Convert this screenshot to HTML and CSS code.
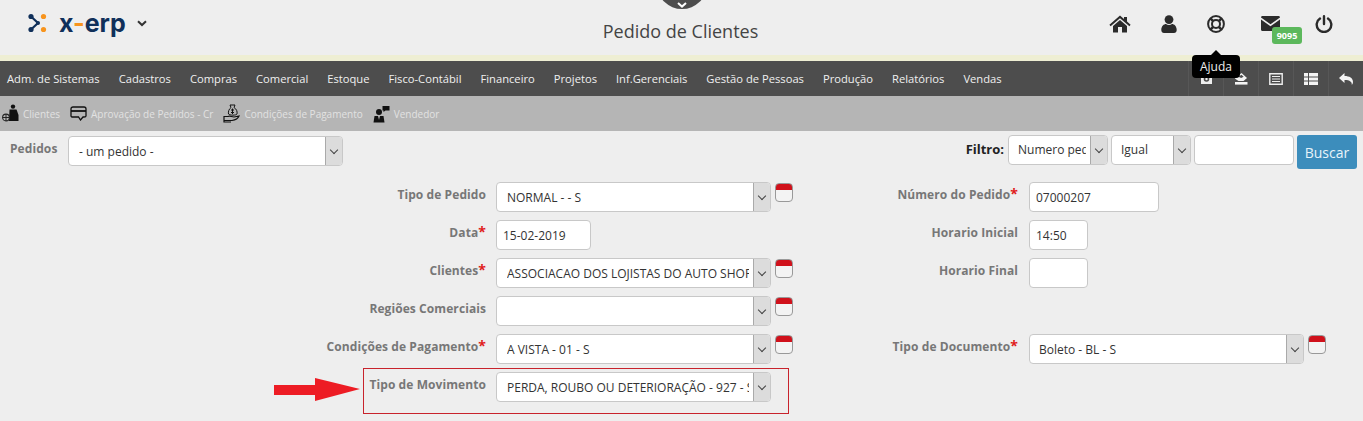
FILE: index.html
```html
<!DOCTYPE html>
<html lang="en">
<head>
  <meta charset="UTF-8">
  <title>X-ERP - Pedido de Clientes</title>
  <link rel="stylesheet" href="styles.css">
</head>
<body>
  <header class="top-bar">
    <div class="logo">
      <svg class="logo-mark" width="20" height="20" viewBox="0 0 20 20">
        <path d="M3 3.5 L10 10 L3 16.5" fill="none" stroke="#10305a" stroke-width="2.2"/>
        <circle cx="3" cy="3.5" r="2.6" fill="#10305a"/>
        <circle cx="3" cy="16.5" r="2.6" fill="#10305a"/>
        <circle cx="10" cy="10" r="2" fill="#10305a"/>
        <circle cx="15.5" cy="3.5" r="2.6" fill="#f7941d"/>
        <circle cx="15.5" cy="16.5" r="2.6" fill="#f7941d"/>
      </svg>
      <span class="logo-text">x<span class="logo-dash">-</span>erp</span>
      <svg class="logo-caret" width="10" height="7" viewBox="0 0 10 7"><path d="M1 1.2 L5 5 L9 1.2" fill="none" stroke="#333" stroke-width="2"/></svg>
    </div>
    <h1 class="page-title">Pedido de Clientes</h1>
    <div class="top-icons">
      <svg width="22" height="18" viewBox="0 0 22 18"><path fill="#2b2b2b" d="M11 0.5 L15 4 V2 H18 V6.6 L21.6 9.8 L20.4 11.2 L11 3.2 L1.6 11.2 L0.4 9.8 Z M4 11 L11 5 L18 11 V17.5 H13 V12 H9 V17.5 H4 Z"/></svg>
      <svg width="16" height="18" viewBox="0 0 16 18"><circle cx="8" cy="4.6" r="4.4" fill="#2b2b2b"/><path fill="#2b2b2b" d="M0.3 15 C0.3 11 3 9 5 9 C6.5 10.2 9.5 10.2 11 9 C13 9 15.7 11 15.7 15 C15.7 17 14.5 18 13 18 H3 C1.5 18 0.3 17 0.3 15 Z"/></svg>
      <svg width="18" height="18" viewBox="0 0 18 18"><circle cx="9" cy="9" r="7.9" fill="none" stroke="#2b2b2b" stroke-width="2"/><circle cx="9" cy="9" r="4" fill="none" stroke="#2b2b2b" stroke-width="2"/><path stroke="#2b2b2b" stroke-width="2.6" d="M3.4 3.4 L6.2 6.2 M14.6 3.4 L11.8 6.2 M3.4 14.6 L6.2 11.8 M14.6 14.6 L11.8 11.8"/></svg>
      <div class="mail">
        <svg width="19" height="15" viewBox="0 0 19 15"><path fill="#2b2b2b" d="M1.5 0 H17.5 C18.4 0 19 0.6 19 1.5 L9.5 8.2 L0 1.5 C0 0.6 0.6 0 1.5 0 Z M0 3.6 L9.5 10.2 L19 3.6 V13.5 C19 14.4 18.4 15 17.5 15 H1.5 C0.6 15 0 14.4 0 13.5 Z"/></svg>
        <span class="badge">9095</span>
      </div>
      <svg width="18" height="18" viewBox="0 0 18 18"><path fill="none" stroke="#2b2b2b" stroke-width="2.4" stroke-linecap="round" d="M5 3.6 A7.3 7.3 0 1 0 13 3.6 M9 1.2 V9"/></svg>
    </div>
    <div class="top-tab">
      <svg width="10" height="6" viewBox="0 0 10 6"><path d="M1 1 L5 4.6 L9 1" fill="none" stroke="#fff" stroke-width="2"/></svg>
    </div>
  </header>
  <div class="cream-strip"></div>

  <nav class="main-nav">
    <ul class="menu">
      <li>Adm. de Sistemas</li>
      <li>Cadastros</li>
      <li>Compras</li>
      <li>Comercial</li>
      <li>Estoque</li>
      <li>Fisco-Contábil</li>
      <li>Financeiro</li>
      <li>Projetos</li>
      <li>Inf.Gerenciais</li>
      <li>Gestão de Pessoas</li>
      <li>Produção</li>
      <li>Relatórios</li>
      <li>Vendas</li>
    </ul>
    <div class="tools">
      <div class="tool"><svg width="13" height="13" viewBox="0 0 13 13"><path fill="#eee" d="M1 2 H12 V12 H1 Z"/><circle cx="6.5" cy="7" r="2.8" fill="#4d4d4d"/><circle cx="6.5" cy="7" r="1.2" fill="#eee"/></svg></div>
      <div class="tool"><svg width="14" height="12" viewBox="0 0 14 12"><path fill="#f4f4f4" d="M7.5 0 L13 5 L9.5 8 H4.5 L0.8 5.6 Z"/><path fill="#4d4d4d" d="M7.5 1.8 L9.6 3.8 L7.2 5 L4.4 3.8 Z"/><path fill="#f4f4f4" d="M1 9 H13.5 V11.6 H1 Z"/></svg></div>
      <div class="tool"><svg width="14" height="12" viewBox="0 0 14 12"><path fill="none" stroke="#eee" stroke-width="1.4" d="M0.8 0.8 H13.2 V11.2 H0.8 Z"/><path stroke="#eee" stroke-width="1.2" d="M3 3.5 H11 M3 6 H11 M3 8.5 H11"/></svg></div>
      <div class="tool"><svg width="14" height="12" viewBox="0 0 14 12"><path fill="#f4f4f4" d="M0 0 H4 V3.4 H0 Z M5 0 H14 V3.4 H5 Z M0 4.4 H4 V7.6 H0 Z M5 4.4 H14 V7.6 H5 Z M0 8.6 H4 V12 H0 Z M5 8.6 H14 V12 H5 Z"/></svg></div>
      <div class="tool"><svg width="14" height="12" viewBox="0 0 14 12"><path fill="#f4f4f4" d="M5.5 0 V3 C10.5 3 14 5 14 9 C14 10.2 13.5 11.2 12.8 12 C13.2 9 11 7 5.5 7 V10 L0 5 Z"/></svg></div>
    </div>
    <div class="tooltip">Ajuda</div>
  </nav>

  <div class="sub-nav">
    <div class="sub-item">
      <svg width="17" height="19" viewBox="0 0 17 19"><circle cx="11" cy="2.6" r="2.2" fill="#111"/><path fill="#111" d="M7.5 5.5 H14.5 L16.5 11 V17 H7 Z"/><circle cx="4" cy="13.5" r="3.4" fill="none" stroke="#222" stroke-width="1.1"/><path stroke="#222" d="M0.6 13.5 H7.4 M4 10 V17"/></svg>
      <span>Clientes</span>
    </div>
    <div class="sub-item">
      <svg width="17" height="15" viewBox="0 0 17 15"><path fill="none" stroke="#111" stroke-width="1.3" d="M3 1 H14 C15.2 1 16 1.8 16 3 V10 C16 11 15.2 11 14 11 H13 L10.5 14 L8.5 11 H3 C1.8 11 1 10.8 1 10 V3 C1 1.8 1.8 1 3 1 Z"/><path stroke="#111" stroke-width="1.8" d="M1 5 H16"/></svg>
      <span>Aprovação de Pedidos - Cr</span>
    </div>
    <div class="sub-item">
      <svg width="17" height="19" viewBox="0 0 17 19"><path fill="none" stroke="#111" d="M7 1 H12 L11 3.5 C13.5 5 14.5 7.5 14 10 C13.5 11.5 6.5 11.5 5.5 10 C5 7.5 6 5 8 3.5 Z"/><path stroke="#111" d="M9.5 4.5 V10 M8 6 H11 M8 8.5 H11"/><path fill="none" stroke="#111" stroke-width="1.2" d="M1 12.5 H5 C7 11.5 8.5 13 11 13 L16 12 C15 14.5 12 16 9 16.5 H1 M1 12 V18 H8"/></svg>
      <span>Condições de Pagamento</span>
    </div>
    <div class="sub-item">
      <svg width="17" height="18" viewBox="0 0 17 18"><circle cx="6" cy="7" r="3" fill="#111"/><path fill="#111" d="M1.5 11 H10.5 L11.5 17.5 H0.5 Z"/><path fill="#ddd" d="M5.2 11 H6.8 L6 15 Z"/><path fill="#111" d="M9.5 1 H16.5 V5.5 H12.5 L10.5 7 V5.5 H9.5 Z"/></svg>
      <span>Vendedor</span>
    </div>
  </div>

  <main class="content">
    <div class="search-bar">
      <div class="orders">
        <label class="form-label">Pedidos</label>
        <div class="select select-orders"><span class="select-value">- um pedido -</span><span class="select-arrow"></span></div>
      </div>
      <div class="filter">
        <label class="filter-label">Filtro:</label>
        <div class="select select-filter"><span class="select-value">Numero pedido</span><span class="select-arrow"></span></div>
        <div class="select select-op"><span class="select-value">Igual</span><span class="select-arrow"></span></div>
        <input class="text-input filter-input" type="text">
        <button class="btn-search" type="button">Buscar</button>
      </div>
    </div>

    <form class="order-form">
      <div class="form-row">
        <div class="field field-left">
          <label class="form-label">Tipo de Pedido</label>
          <div class="select select-main"><span class="select-value">NORMAL - - S</span><span class="select-arrow"></span></div>
          <span class="cal-icon"></span>
        </div>
        <div class="field field-right">
          <label class="form-label">Número do Pedido<em>*</em></label>
          <input class="text-input input-number" type="text" value="07000207">
        </div>
      </div>
      <div class="form-row">
        <div class="field field-left">
          <label class="form-label">Data<em>*</em></label>
          <input class="text-input input-date" type="text" value="15-02-2019">
        </div>
        <div class="field field-right">
          <label class="form-label">Horario Inicial</label>
          <input class="text-input input-time" type="text" value="14:50">
        </div>
      </div>
      <div class="form-row">
        <div class="field field-left">
          <label class="form-label">Clientes<em>*</em></label>
          <div class="select select-main"><span class="select-value">ASSOCIACAO DOS LOJISTAS DO AUTO SHOPPING</span><span class="select-arrow"></span></div>
          <span class="cal-icon"></span>
        </div>
        <div class="field field-right">
          <label class="form-label">Horario Final</label>
          <input class="text-input input-time" type="text">
        </div>
      </div>
      <div class="form-row">
        <div class="field field-left">
          <label class="form-label">Regiões Comerciais</label>
          <div class="select select-main"><span class="select-value"></span><span class="select-arrow"></span></div>
          <span class="cal-icon"></span>
        </div>
      </div>
      <div class="form-row">
        <div class="field field-left">
          <label class="form-label">Condições de Pagamento<em>*</em></label>
          <div class="select select-main"><span class="select-value">A VISTA - 01 - S</span><span class="select-arrow"></span></div>
          <span class="cal-icon"></span>
        </div>
        <div class="field field-right">
          <label class="form-label">Tipo de Documento<em>*</em></label>
          <div class="select select-doc"><span class="select-value">Boleto - BL - S</span><span class="select-arrow"></span></div>
          <span class="cal-icon"></span>
        </div>
      </div>
      <div class="form-row">
        <div class="field field-left">
          <label class="form-label">Tipo de Movimento</label>
          <div class="select select-main"><span class="select-value">PERDA, ROUBO OU DETERIORAÇÃO - 927 - S</span><span class="select-arrow"></span></div>
        </div>
      </div>
      <!-- marcacao vermelha por cima do formulario -->
      <div class="highlight-box"></div>
      <svg class="highlight-arrow" width="86" height="24" viewBox="0 0 86 24"><path fill="#ed1c24" d="M0 7 H41 V0 L86 11 L41 23 V17 H0 Z"/></svg>
    </form>
  </main>
</body>
</html>
```

FILE: styles.css
```css
* {
  margin: 0;
  padding: 0;
  box-sizing: border-box;
}

body {
  font-family: "Open Sans", Arial, sans-serif;
  background-color: #eeeeee;
  color: #333;
  height: 421px;
  overflow: hidden;
}

/* Topo */
.top-bar {
  position: relative;
  height: 55px;
  display: flex;
  align-items: flex-start;
  background-color: #eeeeee;
}

.logo {
  display: flex;
  align-items: center;
  padding: 13px 0 0 28px;
  width: 400px;
}

.logo-text {
  margin-left: 11px;
  font-family: Inter, sans-serif;
  font-weight: 700;
  font-size: 25px;
  line-height: 20px;
  color: #10305a;
}

.logo-dash {
  color: #f7941d;
}

.logo-caret {
  margin-left: 11px;
}

.page-title {
  position: absolute;
  left: 0;
  right: 2px;
  top: 18px;
  text-align: center;
  font-size: 18px;
  line-height: 26px;
  font-weight: 400;
  color: #444;
}

.top-icons {
  margin-left: auto;
  display: flex;
  align-items: center;
  gap: 30px;
  padding: 15px 30px 0 0;
}

.mail {
  position: relative;
  margin: -1px 5px 0 6px;
  display: flex;
}

.badge {
  position: absolute;
  left: 11px;
  top: 11px;
  width: 30px;
  height: 17px;
  background-color: #5cb85c;
  border-radius: 3px;
  color: #fff;
  font-size: 9px;
  font-weight: 700;
  line-height: 17px;
  text-align: center;
}

.top-tab {
  position: absolute;
  left: 657px;
  top: -40px;
  width: 50px;
  height: 49px;
  border-radius: 50%;
  background-color: #4d4d4d;
  display: flex;
  justify-content: center;
  align-items: flex-end;
  padding-bottom: 1px;
}

.cream-strip {
  height: 6px;
  background-color: #eeeed3;
}

/* Menu principal */
.main-nav {
  position: relative;
  height: 35px;
  background-color: #4d4d4d;
  display: flex;
  align-items: center;
  justify-content: space-between;
}

.menu {
  display: flex;
  gap: 19px;
  list-style: none;
  padding-left: 7px;
  font-size: 11.2px;
  color: #f0f0f0;
}

.tools {
  display: flex;
  height: 100%;
}

.tool {
  width: 35px;
  display: flex;
  align-items: center;
  justify-content: center;
  border-left: 1px solid #575757;
}

.tooltip {
  position: absolute;
  left: 1192px;
  top: -6px;
  width: 48px;
  height: 23px;
  background-color: #000;
  border-radius: 4px;
  color: #eee;
  font-size: 12px;
  line-height: 23px;
  text-align: center;
}

.tooltip::before {
  content: '';
  position: absolute;
  left: 19px;
  top: -5px;
  border-left: 5px solid transparent;
  border-right: 5px solid transparent;
  border-bottom: 5px solid #000;
}

/* Sub menu */
.sub-nav {
  height: 35px;
  background-color: #b5b5b5;
  display: flex;
  align-items: center;
  padding-left: 2px;
  gap: 10px;
  font-size: 10px;
  color: #e2e2e2;
}

.sub-item {
  display: flex;
  align-items: center;
  gap: 4px;
}

/* Conteudo */
.content {
  padding: 4px 0 0 0;
}

.search-bar {
  display: flex;
  justify-content: space-between;
  height: 47px;
}

.orders {
  display: flex;
  align-items: flex-start;
  padding-left: 10px;
  gap: 10px;
  padding-top: 1px;
}

.orders .form-label {
  width: 48px;
}

.form-label {
  font-size: 12px;
  font-weight: 700;
  color: #777;
  line-height: 18px;
  padding-top: 4px;
  letter-spacing: 0.08px;
}

.form-label em {
  color: #e02020;
  font-style: normal;
  font-size: 14px;
  line-height: 14px;
}

.select {
  display: flex;
  height: 30px;
  background-color: #fff;
  border: 1px solid #c8c8c8;
  border-radius: 4px;
  font-size: 12px;
  color: #333;
}

.select-value {
  flex: 1;
  min-width: 0;
  margin: 0 4px 0 10px;
  line-height: 29px;
  white-space: nowrap;
  overflow: hidden;
}

.filter .select-value,
.select-doc .select-value {
  margin-left: 9px;
}

.filter .select-value {
  line-height: 27px;
}

.select-arrow {
  position: relative;
  flex: none;
  width: 17px;
  background-color: #dcdcdc;
  border-left: 1px solid #aaa;
  border-radius: 0 3px 3px 0;
}

.select-arrow::after {
  content: '';
  position: absolute;
  left: 5px;
  top: 10px;
  width: 5px;
  height: 5px;
  border-right: 1px solid #444;
  border-bottom: 1px solid #444;
  transform: rotate(45deg);
}

.select-orders {
  width: 275px;
}

.filter {
  display: flex;
  align-items: flex-start;
  gap: 3px;
  padding-right: 6px;
}

.filter-label {
  font-size: 13px;
  font-weight: 700;
  color: #222;
  line-height: 28px;
  margin-right: 1px;
}

.select-filter {
  width: 100px;
}

.select-op {
  width: 80px;
}

.text-input {
  display: block;
  height: 30px;
  background-color: #fff;
  border: 1px solid #c8c8c8;
  border-radius: 4px;
  font-family: inherit;
  font-size: 12px;
  color: #333;
  padding: 0 6px;
  outline: none;
}

.filter-input {
  width: 100px;
}

.btn-search {
  width: 60px;
  height: 34px;
  background-color: #3c8dbc;
  border: none;
  border-radius: 3px;
  color: #e8f4fa;
  font-family: inherit;
  font-size: 14px;
}

/* Formulario */
.order-form {
  position: relative;
}

.form-row {
  display: flex;
  height: 38px;
}

.field {
  display: flex;
  align-items: flex-start;
}

.field .form-label {
  text-align: right;
  margin-right: 10px;
}

.field-left {
  width: 793px;
}

.field-left .form-label {
  width: 486px;
}

.field-right .form-label {
  width: 225px;
  margin-right: 11px;
}

.select-main {
  width: 275px;
}

.select-doc {
  width: 275px;
}

.cal-icon {
  position: relative;
  display: block;
  width: 18px;
  height: 19px;
  margin: 1px 0 0 4px;
  background: linear-gradient(#d0111b 0, #d0111b 6px, #f3f3f3 6px);
  border: 1px solid #999;
  border-radius: 4px;
}

.input-number {
  width: 130px;
}

.input-date {
  width: 95px;
}

.input-time {
  width: 59px;
}

.highlight-box {
  position: absolute;
  left: 363px;
  top: 186px;
  width: 426px;
  height: 46px;
  border: 1px solid #c8232c;
}

.highlight-arrow {
  position: absolute;
  left: 274px;
  top: 196px;
}
```
